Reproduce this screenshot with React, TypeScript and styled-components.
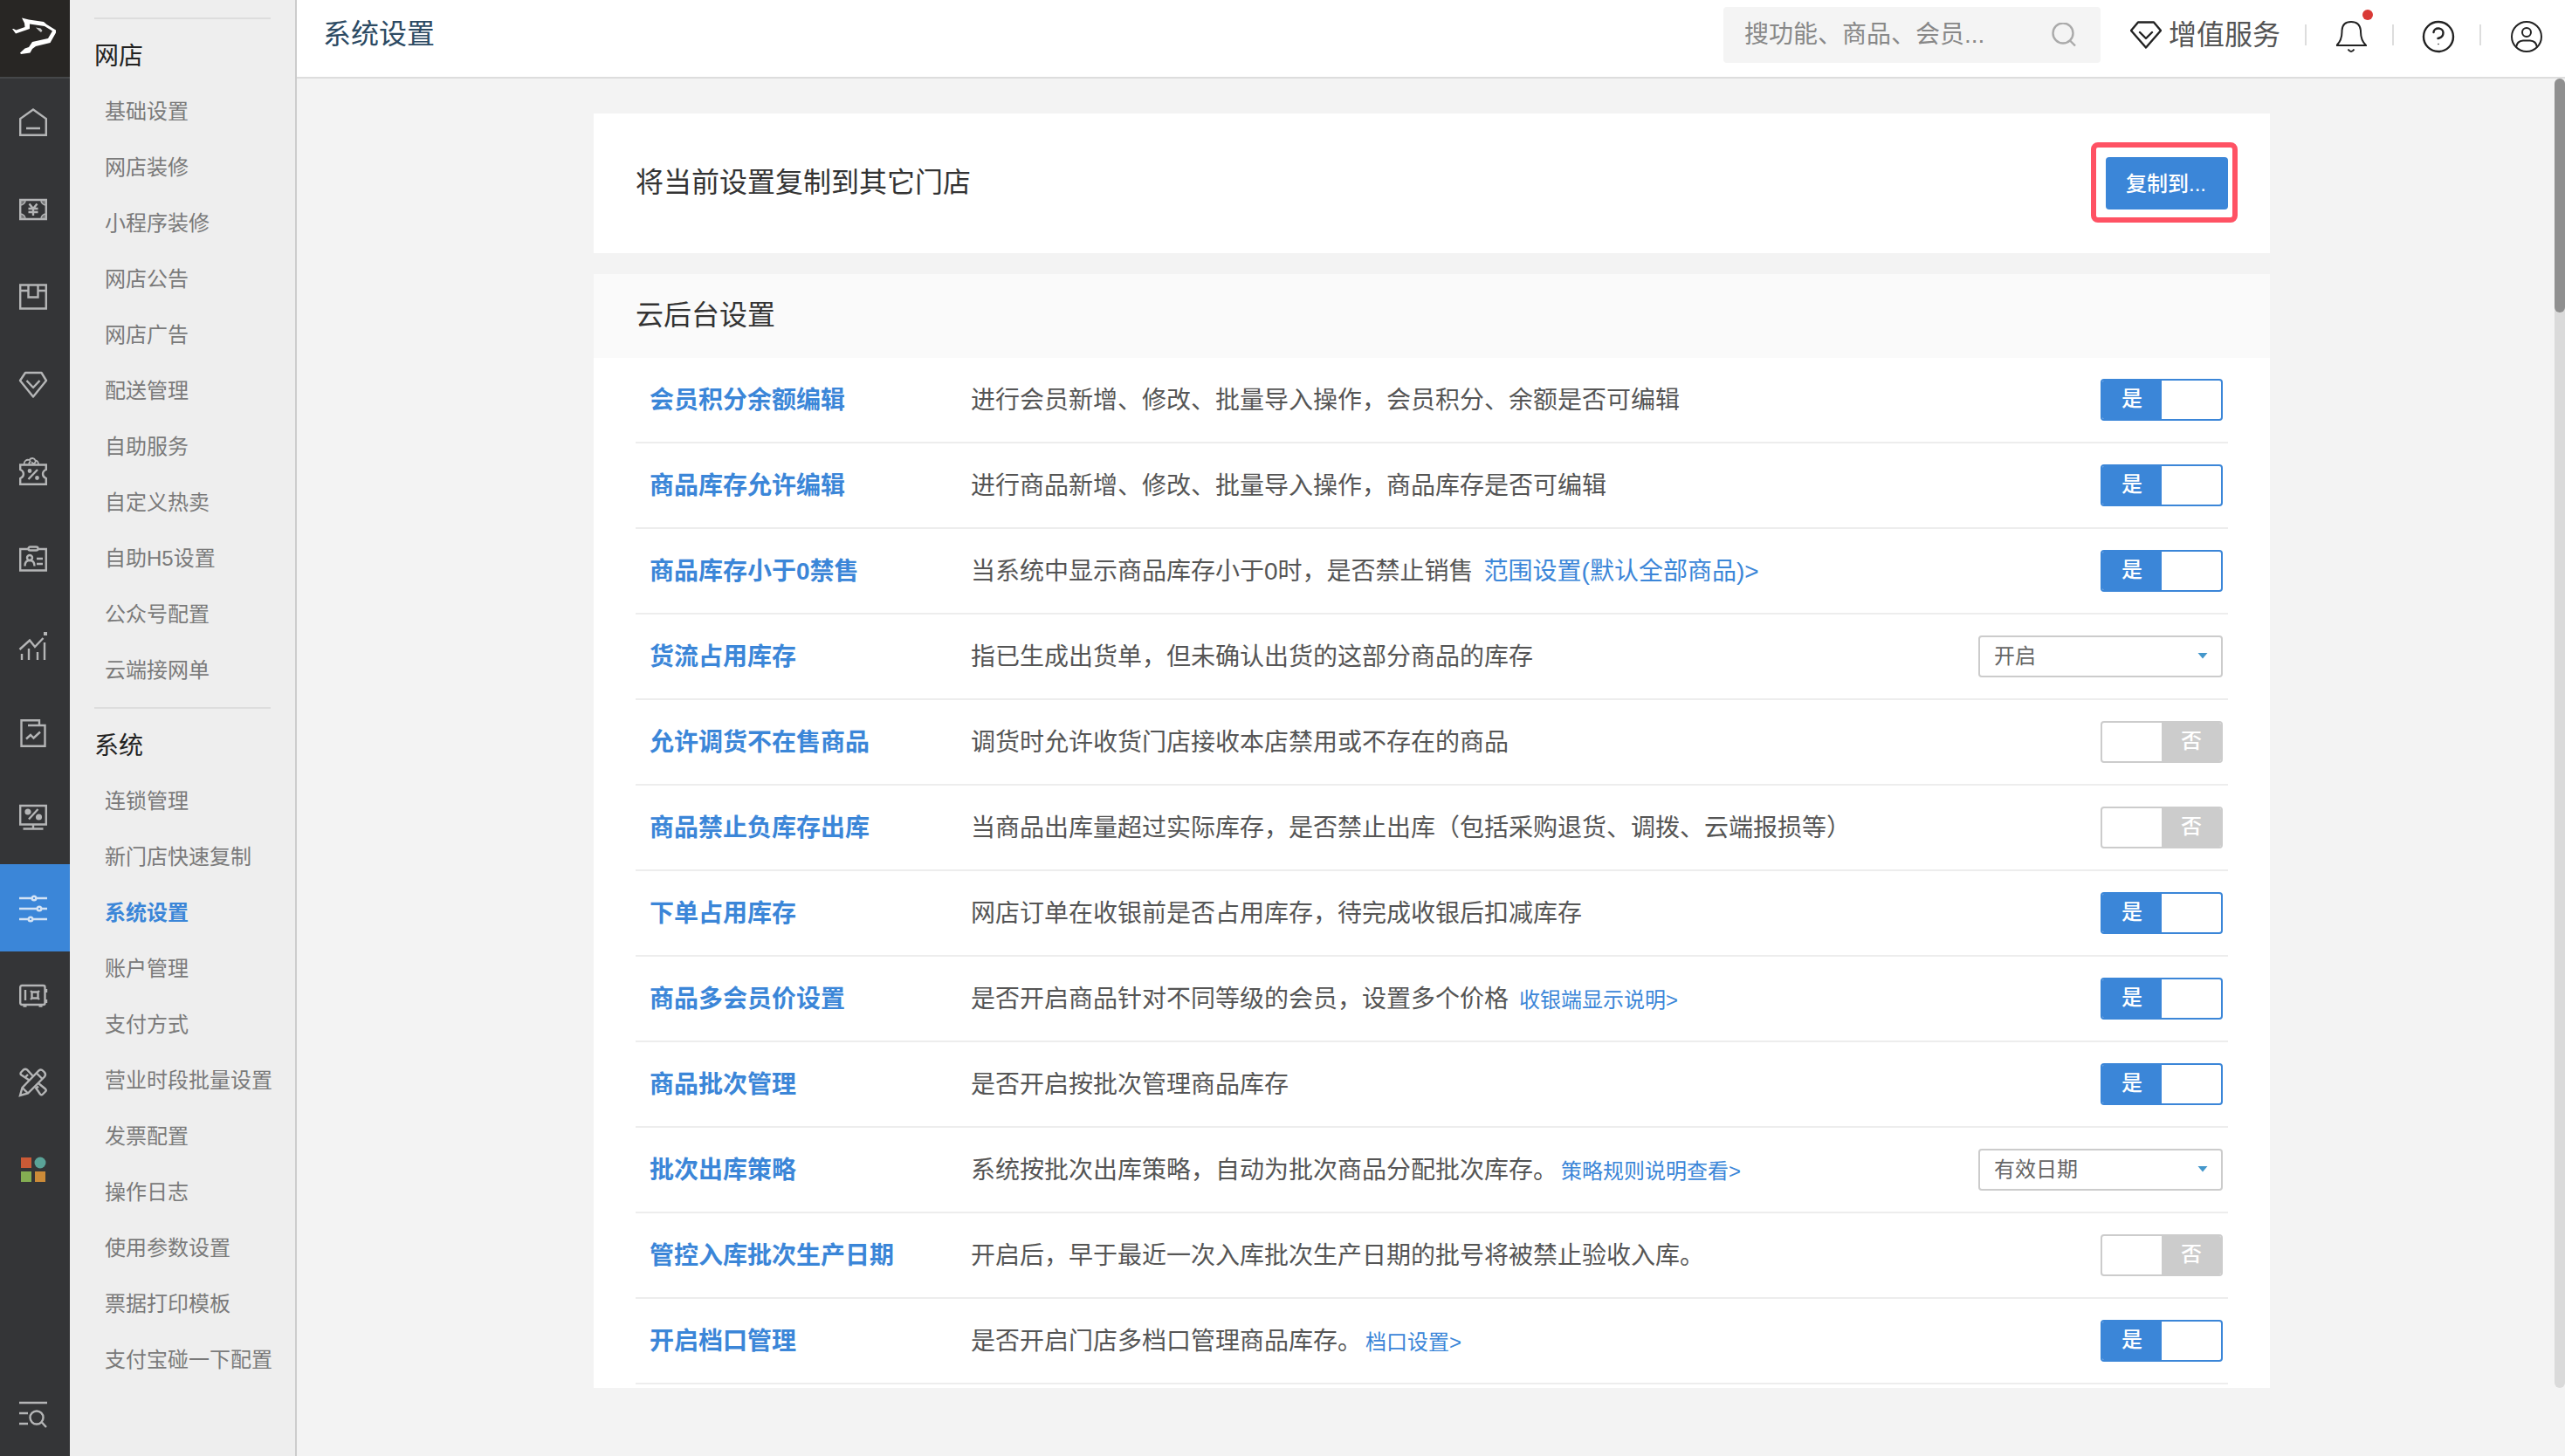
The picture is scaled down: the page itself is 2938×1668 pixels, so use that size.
import React, { useState } from "react";
import styled, { createGlobalStyle, css } from "styled-components";

const color = {
  blue: "#3b86d8",
  rail: "#343537",
  railIcon: "#b4b5b6",
  line: "#ededed",
  edge: "#cccccc",
  text: "#333333",
  body: "#555555",
  muted: "#7a7a7a",
};

const GlobalStyle = createGlobalStyle`
  * { box-sizing: border-box; }
  body {
    margin: 0;
    background: #f3f3f3;
    color: ${color.text};
    font-family: "Liberation Sans", "Noto Sans CJK SC", sans-serif;
    font-size: 28px;
  }
  button, input, select { font-family: inherit; }
  ul { margin: 0; padding: 0; list-style: none; }
  h1, h2, h3, p { margin: 0; font-weight: 400; }
  a { text-decoration: none; }
`;

const Shell = styled.div`
  display: flex;
  height: 100vh;
  overflow: hidden;
`;

/* ---------- icon rail ---------- */

const Rail = styled.nav`
  display: flex;
  flex-direction: column;
  flex: none;
  width: 80px;
  background: ${color.rail};
`;

const LogoLink = styled.a`
  display: flex;
  flex: none;
  align-items: flex-start;
  height: 90px;
  padding: 20px 0 0 14px;
  background: #282624;
  border-bottom: 2px solid #454749;
`;

const RailButton = styled.button<{ $active?: boolean; $last?: boolean }>`
  display: flex;
  flex: none;
  align-items: center;
  height: ${(p) => (p.$last ? 96 : 100)}px;
  margin-top: ${(p) => (p.$last ? "auto" : 0)};
  padding: 0 0 0 18px;
  border: 0;
  cursor: pointer;
  background: ${(p) => (p.$active ? color.blue : "transparent")};
  color: ${(p) => (p.$active ? "#d3e3f5" : color.railIcon)};
`;

const RailSvg = styled.svg.attrs({ viewBox: "-4 -4 40 40", "aria-hidden": true })`
  width: 40px;
  height: 40px;
  fill: none;
  stroke: currentColor;
  stroke-width: 2.4;
`;

const railIcons: { name: string; art: React.ReactNode }[] = [
  {
    name: "首页",
    art: <path d="M16 1.500 1.200 12v18.800h29.600V12zM8 23h16" />,
  },
  {
    name: "收银",
    art: (
      <>
        <path d="M1.200 5h29.600v22H1.200z" />
        <path d="M1.200 5h6A6 6 0 0 1 1.200 11zM30.800 5h-6a6 6 0 0 0 6 6zM1.200 27h6a6 6 0 0 0-6-6zM30.800 27h-6a6 6 0 0 1 6-6z" fill="currentColor" fillOpacity=".5" strokeWidth="1.400" />
        <path d="m11.500 9.500 4.500 5.500 4.500-5.500M16 15v8M10.500 15h11M10.500 19h11" />
      </>
    ),
  },
  {
    name: "商品",
    art: <path d="M1.200 2.500h29.600v27H1.200zM1 9h10M21 9h10M10.500 3v13.500h11V3" />,
  },
  {
    name: "会员",
    art: <path d="M7 3h18.500L31 12 16 30.500 1 12zM8.500 12l7.500 8 7.500-8" strokeLinejoin="round" />,
  },
  {
    name: "营销",
    art: (
      <>
        <path d="M1.200 8.500h29.600v5.500c-5 2-5 8 0 10v6.800H1.200V24c5-2 5-8 0-10z" />
        <path d="m21 14-10.500 11" />
        <circle cx="12" cy="15.500" r="1.200" />
        <circle cx="20.500" cy="23.500" r="1.200" />
        <path d="M5.500 8c0-4 3-6 6-5 2-3 6-2.500 7 .5 2 0 3.500 2 3.500 4.500M11 7.500l2-4M14 5.500l3 2 2-3" strokeWidth="1.800" />
      </>
    ),
  },
  {
    name: "员工",
    art: (
      <>
        <path d="M10 5H1.200v24.500h29.600V5H22" />
        <rect x="10.500" y="2.500" width="11" height="4" rx="2" />
        <circle cx="12" cy="15" r="3" />
        <path d="M6.500 24.500c0-4 2-6.500 5.500-6.500s5.500 2.500 5.500 6.500M20 16h7M20 22h7" />
      </>
    ),
  },
  {
    name: "数据",
    art: (
      <>
        <path d="m.5 20 11.500-10.500 6 7.500L27.500 7M3 25v7M11 19v13M21 23v9M29 12v20" />
        <path d="M28 0h4v4h-4z" fill="currentColor" stroke="none" />
      </>
    ),
  },
  {
    name: "报表",
    art: <path d="M10 7h19.500v23.800h-27V1.200H23V7M8 22.500l5-4.500 3.500 3.500 7.500-7" />,
  },
  {
    name: "收银端",
    art: (
      <>
        <path d="M1.200-1h29.600v21.500H1.200zM16 20.500v5M4.500 25.500h23M11 14.500 21.500 3" />
        <circle cx="10" cy="6" r="2.400" fill="currentColor" />
        <circle cx="22.500" cy="12" r="2.400" fill="currentColor" />
      </>
    ),
  },
  {
    name: "设置",
    art: (
      <>
        <path d="M0 5h14.500M19.500 5H32M0 17h20.500M25.500 17H32M0 29h10.500M15.500 29H32" />
        <circle cx="17" cy="5" r="2.300" />
        <circle cx="23" cy="17" r="2.300" />
        <circle cx="13" cy="29" r="2.300" />
      </>
    ),
  },
  {
    name: "资金",
    art: (
      <>
        <rect x="1.200" y="5" width="28.300" height="22" rx="2" />
        <path d="M4.500 28.500h4M22.500 28.500h4M31 9v4M31 21v4M7 10v12" />
        <path d="M14.500 12.500h7v7h-7zM13 11l2 2M23 11l-2 2M13 21l2-2M23 21l-2-2" />
      </>
    ),
  },
  {
    name: "工具",
    art: (
      <>
        <path d="M1 31 3.500 22 22.500 2.500q2.500-2 5 .5l1.500 1.500q2 2.500 0 5L10 28.500zM4 22.500l5.500 5.500M20 5.500l6.500 6.500" />
        <path d="m11.500 13.500-9-6Q.5 6 2.500 4L5 1.500q2-1.500 4 0l6.500 7M6 11l4-4M18.500 21.500l5.500 8q1.500 1.500 3 0l3-3q1.500-1.500 0-3L22 17M19 23l3-2.500" />
      </>
    ),
  },
  {
    name: "应用",
    art: (
      <g stroke="none">
        <path d="M2 2h12v12H2z" fill="#cb5a36" />
        <circle cx="24" cy="8" r="6.500" fill="#5aa398" />
        <path d="M2 18h12v12H2z" fill="#84ae52" />
        <path d="M18 18h12v12H18z" fill="#cc8b38" />
      </g>
    ),
  },
];

function Logo() {
  return (
    <svg width="50" height="42" viewBox="0 0 50 42" role="img" aria-label="银豹">
      <path
        fill="#fff"
        d="m11 .5 8 2 17 2.500 3.500 3L50 14.500v3L43.500 29 27 33l-4 3-2.500 4.500L10 42l-1-1.500 5.500-5L19 34l4-6 18-4 5-8.500-9-5.500L20 7.500v5.500L4 18.500 0 13h1.500l3 1.500L14.500 11 14 6.500z"
      />
      <path fill="#c9c9c9" d="m27 11.500 5.500 1 2 2.500-1.500 2-2.500-2z" />
    </svg>
  );
}

/* ---------- section menu ---------- */

const Menu = styled.nav`
  flex: none;
  width: 260px;
  padding-top: 20px;
  background: #eeeeee;
  border-right: 2px solid ${color.edge};
`;

const MenuGroup = styled.section`
  margin: 0 28px 10px;
  padding-top: 10px;
  border-top: 2px solid #dddddd;
`;

const MenuHeading = styled.h2`
  padding-top: 2px;
  font-size: 28px;
  line-height: 62px;
  color: #222222;
`;

const MenuLink = styled.a<{ $active: boolean }>`
  display: block;
  padding-left: 12px;
  font-size: 24px;
  line-height: 64px;
  white-space: nowrap;
  color: ${(p) => (p.$active ? color.blue : color.muted)};
  font-weight: ${(p) => (p.$active ? 700 : 400)};
`;

const menu = [
  {
    title: "网店",
    items: ["基础设置", "网店装修", "小程序装修", "网店公告", "网店广告", "配送管理", "自助服务", "自定义热卖", "自助H5设置", "公众号配置", "云端接网单"],
  },
  {
    title: "系统",
    items: ["连锁管理", "新门店快速复制", "系统设置", "账户管理", "支付方式", "营业时段批量设置", "发票配置", "操作日志", "使用参数设置", "票据打印模板", "支付宝碰一下配置"],
  },
];

/* ---------- top bar ---------- */

const Main = styled.main`
  display: flex;
  flex: 1;
  flex-direction: column;
  min-width: 0;
`;

const TopBar = styled.header`
  display: flex;
  flex: none;
  align-items: center;
  height: 90px;
  padding: 0 26px 8px 30px;
  background: #ffffff;
  border-bottom: 2px solid #dddddd;
`;

const PageTitle = styled.h1`
  padding-bottom: 2px;
  font-size: 32px;
  line-height: 48px;
  color: #2c4a63;
`;

const SearchBox = styled.label`
  display: flex;
  align-items: center;
  width: 432px;
  height: 64px;
  margin-left: auto;
  padding: 0 28px 0 24px;
  border-radius: 4px;
  background: #f4f4f4;
`;

const SearchInput = styled.input`
  flex: 1;
  min-width: 0;
  height: 48px;
  padding: 0;
  border: 0;
  outline: 0;
  background: transparent;
  font-size: 28px;
  color: ${color.text};
  &::placeholder { color: #888888; opacity: 1; }
`;

const ServiceLink = styled.a`
  display: flex;
  align-items: center;
  gap: 8px;
  margin-left: 34px;
  font-size: 32px;
  line-height: 48px;
  color: ${color.body};
`;

const Tools = styled.div`
  display: flex;
  align-items: center;
  margin-left: 28px;
`;

const ToolDivider = styled.span`
  width: 2px;
  height: 24px;
  background: #dddddd;
`;

const ToolButton = styled.button<{ $last?: boolean }>`
  position: relative;
  display: flex;
  justify-content: center;
  width: ${(p) => (p.$last ? 36 : 98)}px;
  margin-left: ${(p) => (p.$last ? 34 : 0)}px;
  padding: 4px 0 0 ${(p) => (p.$last ? 0 : 4)}px;
  border: 0;
  background: none;
  color: #222222;
  cursor: pointer;
`;

const AlertDot = styled.span`
  position: absolute;
  top: -8px;
  left: 64px;
  width: 12px;
  height: 12px;
  border-radius: 50%;
  background: #d93a36;
`;

/* ---------- settings pane ---------- */

const Pane = styled.div`
  position: relative;
  display: flex;
  flex: 1;
  flex-direction: column;
  gap: 24px;
  min-height: 0;
  margin-bottom: 78px;
  padding: 40px 338px 0 340px;
  overflow: hidden;
`;

const ScrollTrack = styled.div`
  position: absolute;
  top: 0;
  right: 0;
  bottom: 0;
  width: 12px;
  border-radius: 6px;
  background: #dadada;
`;

const ScrollThumb = styled.div`
  height: 268px;
  border-radius: 6px;
  background: #8f8f8f;
`;

const CopyCard = styled.section`
  display: flex;
  flex: none;
  align-items: center;
  justify-content: space-between;
  padding: 50px 48px;
  background: #ffffff;
`;

const SectionTitle = styled.h2`
  font-size: 32px;
  line-height: 48px;
  padding-bottom: 2px;
  color: ${color.text};
`;

const CopyAction = styled.div`
  position: relative;
`;

const CopyButton = styled.button`
  display: block;
  width: 140px;
  height: 60px;
  padding: 0 2px 4px 0;
  border: 0;
  border-radius: 4px;
  background: ${color.blue};
  color: #ffffff;
  font-size: 24px;
  font-weight: 500;
  cursor: pointer;
`;

const Highlight = styled.span`
  position: absolute;
  inset: -17px -11px -15px -17px;
  border: 6px solid #ff5264;
  border-radius: 8px;
  pointer-events: none;
`;

const SettingsCard = styled.section`
  flex: 1;
  min-height: 0;
  overflow: hidden;
  background: #ffffff;
`;

const SettingsHead = styled.header`
  display: flex;
  align-items: center;
  height: 96px;
  padding: 0 48px;
  background: #fafafa;
`;

const SettingsList = styled.ul`
  padding: 0 48px;
`;

const SettingRow = styled.li`
  display: grid;
  grid-template-columns: 368px 1fr auto;
  align-items: center;
  height: 98px;
  padding: 0 6px 0 16px;
  border-bottom: 2px solid ${color.line};
`;

const SettingName = styled.h3`
  padding-top: 2px;
  font-size: 28px;
  line-height: 40px;
  font-weight: 700;
  color: ${color.blue};
`;

const SettingText = styled.p`
  padding-top: 2px;
  font-size: 28px;
  line-height: 40px;
  color: ${color.body};
`;

const InlineLink = styled.a<{ $small?: boolean; $tight?: boolean }>`
  margin-left: ${(p) => (p.$tight ? 4 : 12)}px;
  font-size: ${(p) => (p.$small ? 24 : 28)}px;
  color: ${color.blue};
`;

const Toggle = styled.label<{ $on: boolean }>`
  position: relative;
  display: grid;
  grid-template-columns: 1fr 1fr;
  width: 140px;
  height: 48px;
  overflow: hidden;
  border: 2px solid ${(p) => (p.$on ? color.blue : color.edge)};
  border-radius: 4px;
  background: #ffffff;
  cursor: pointer;
`;

const ToggleInput = styled.input`
  position: absolute;
  inset: 0;
  width: 100%;
  height: 100%;
  margin: 0;
  opacity: 0;
  cursor: pointer;
`;

const ToggleText = styled.span<{ $on: boolean }>`
  display: flex;
  align-items: center;
  justify-content: center;
  padding-bottom: 2px;
  font-size: 24px;
  line-height: 40px;
  font-weight: 500;
  color: #ffffff;
  ${(p) =>
    p.$on
      ? css`
          grid-column: 1;
          background: ${color.blue};
        `
      : css`
          grid-column: 2;
          background: ${color.edge};
        `}
`;

const SelectWrap = styled.div`
  position: relative;
  width: 280px;
`;

const Select = styled.select`
  display: block;
  width: 100%;
  height: 48px;
  padding: 0 44px 2px 16px;
  appearance: none;
  border: 2px solid ${color.edge};
  border-radius: 4px;
  background: #ffffff;
  color: #666666;
  font-size: 24px;
`;

const SelectArrow = styled.svg`
  position: absolute;
  top: 20px;
  right: 17px;
  pointer-events: none;
`;

type Setting = {
  name: string;
  text: string;
  on?: boolean;
  choices?: string[];
  link?: { label: string; small?: boolean; tight?: boolean };
};

const settings: Setting[] = [
  { name: "会员积分余额编辑", text: "进行会员新增、修改、批量导入操作，会员积分、余额是否可编辑", on: true },
  { name: "商品库存允许编辑", text: "进行商品新增、修改、批量导入操作，商品库存是否可编辑", on: true },
  { name: "商品库存小于0禁售", text: "当系统中显示商品库存小于0时，是否禁止销售", on: true, link: { label: "范围设置(默认全部商品)>" } },
  { name: "货流占用库存", text: "指已生成出货单，但未确认出货的这部分商品的库存", choices: ["开启", "关闭"] },
  { name: "允许调货不在售商品", text: "调货时允许收货门店接收本店禁用或不存在的商品", on: false },
  { name: "商品禁止负库存出库", text: "当商品出库量超过实际库存，是否禁止出库（包括采购退货、调拨、云端报损等）", on: false },
  { name: "下单占用库存", text: "网店订单在收银前是否占用库存，待完成收银后扣减库存", on: true },
  { name: "商品多会员价设置", text: "是否开启商品针对不同等级的会员，设置多个价格", on: true, link: { label: "收银端显示说明>", small: true } },
  { name: "商品批次管理", text: "是否开启按批次管理商品库存", on: true },
  { name: "批次出库策略", text: "系统按批次出库策略，自动为批次商品分配批次库存。", choices: ["有效日期", "生产日期"], link: { label: "策略规则说明查看>", small: true, tight: true } },
  { name: "管控入库批次生产日期", text: "开启后，早于最近一次入库批次生产日期的批号将被禁止验收入库。", on: false },
  { name: "开启档口管理", text: "是否开启门店多档口管理商品库存。", on: true, link: { label: "档口设置>", small: true, tight: true } },
];

function Switch({ initial, labelledBy }: { initial: boolean; labelledBy: string }) {
  const [on, setOn] = useState(initial);
  return (
    <Toggle $on={on}>
      <ToggleInput type="checkbox" role="switch" aria-labelledby={labelledBy} checked={on} onChange={() => setOn(!on)} />
      <ToggleText $on={on}>{on ? "是" : "否"}</ToggleText>
    </Toggle>
  );
}

function Row({ item, id }: { item: Setting; id: string }) {
  return (
    <SettingRow>
      <SettingName id={id}>{item.name}</SettingName>
      <SettingText>
        {item.text}
        {item.link && (
          <InlineLink href="#" $small={item.link.small} $tight={item.link.tight}>
            {item.link.label}
          </InlineLink>
        )}
      </SettingText>
      {item.choices ? (
        <SelectWrap>
          <Select aria-labelledby={id} defaultValue={item.choices[0]}>
            {item.choices.map((c) => (
              <option key={c}>{c}</option>
            ))}
          </Select>
          <SelectArrow width="12" height="7" viewBox="0 0 12 7" aria-hidden="true">
            <path d="M.5 0h11L6 6.500z" fill="#4497cb" />
          </SelectArrow>
        </SelectWrap>
      ) : (
        <Switch initial={!!item.on} labelledBy={id} />
      )}
    </SettingRow>
  );
}

export default function App() {
  return (
    <>
      <GlobalStyle />
      <Shell>
        <Rail aria-label="主导航">
          <LogoLink href="#">
            <Logo />
          </LogoLink>
          {railIcons.map((icon) => (
            <RailButton key={icon.name} type="button" aria-label={icon.name} $active={icon.name === "设置"}>
              <RailSvg>{icon.art}</RailSvg>
            </RailButton>
          ))}
          <RailButton type="button" aria-label="搜索菜单" $last>
            <RailSvg>
              <path d="M0 3h32M0 15h10M0 27h10M26 25.500l5 5.500" />
              <circle cx="20" cy="20" r="7.500" />
            </RailSvg>
          </RailButton>
        </Rail>

        <Menu aria-label="设置菜单">
          {menu.map((group) => (
            <MenuGroup key={group.title}>
              <MenuHeading>{group.title}</MenuHeading>
              <ul>
                {group.items.map((item) => (
                  <li key={item}>
                    <MenuLink href="#" $active={item === "系统设置"}>
                      {item}
                    </MenuLink>
                  </li>
                ))}
              </ul>
            </MenuGroup>
          ))}
        </Menu>

        <Main>
          <TopBar>
            <PageTitle>系统设置</PageTitle>
            <SearchBox>
              <SearchInput type="text" aria-label="搜索" placeholder="搜功能、商品、会员..." />
              <svg width="28" height="28" viewBox="0 0 28 28" fill="none" stroke="#aaaaaa" strokeWidth="2.400" aria-hidden="true">
                <circle cx="13" cy="12" r="11.500" />
                <path d="m21 20.500 6 6" />
              </svg>
            </SearchBox>
            <ServiceLink href="#">
              <svg width="36" height="32" viewBox="0 0 36 32" fill="none" stroke="#222222" strokeWidth="2.400" strokeLinejoin="round" strokeLinecap="round" aria-hidden="true">
                <path d="M9 1.500h18l8 9.500-17 19.500L1 11zM11 13l7 7 7-7" />
              </svg>
              增值服务
            </ServiceLink>
            <Tools>
              <ToolDivider />
              <ToolButton type="button" aria-label="通知">
                <svg width="36" height="38" viewBox="0 0 36 38" fill="none" stroke="currentColor" strokeWidth="2" aria-hidden="true">
                  <path d="M1 29h34C31 25 29 20 29 13.500V12Q28 2 18 2T7.500 12v1.500C7.500 20 5.500 25 1.500 29M14.500 33.500q3.500 5 7 0" />
                </svg>
                <AlertDot />
              </ToolButton>
              <ToolDivider />
              <ToolButton type="button" aria-label="帮助">
                <svg width="38" height="38" viewBox="0 0 38 38" fill="none" stroke="currentColor" strokeWidth="2.400" aria-hidden="true">
                  <circle cx="19" cy="19" r="17" />
                  <path d="M13.500 14c0-6 11-6 11 .5 0 4-3 6-6 6.500" strokeLinecap="round" />
                  <circle cx="19" cy="27.500" r=".8" fill="currentColor" stroke="none" />
                </svg>
              </ToolButton>
              <ToolDivider />
              <ToolButton type="button" aria-label="账户" $last>
                <svg width="36" height="36" viewBox="0 0 36 36" fill="none" stroke="currentColor" strokeWidth="2" aria-hidden="true">
                  <circle cx="18" cy="18" r="17" />
                  <circle cx="18" cy="13" r="5" />
                  <path d="M6 30q1-7 8-7.500h8q7 .5 8 7.500" />
                </svg>
              </ToolButton>
            </Tools>
          </TopBar>

          <Pane>
            <CopyCard>
              <SectionTitle>将当前设置复制到其它门店</SectionTitle>
              <CopyAction>
                <CopyButton type="button">复制到...</CopyButton>
                <Highlight />
              </CopyAction>
            </CopyCard>
            <SettingsCard>
              <SettingsHead>
                <SectionTitle>云后台设置</SectionTitle>
              </SettingsHead>
              <SettingsList>
                {settings.map((item, i) => (
                  <Row key={item.name} id={`setting-${i}`} item={item} />
                ))}
              </SettingsList>
            </SettingsCard>
            <ScrollTrack>
              <ScrollThumb />
            </ScrollTrack>
          </Pane>
        </Main>
      </Shell>
    </>
  );
}
